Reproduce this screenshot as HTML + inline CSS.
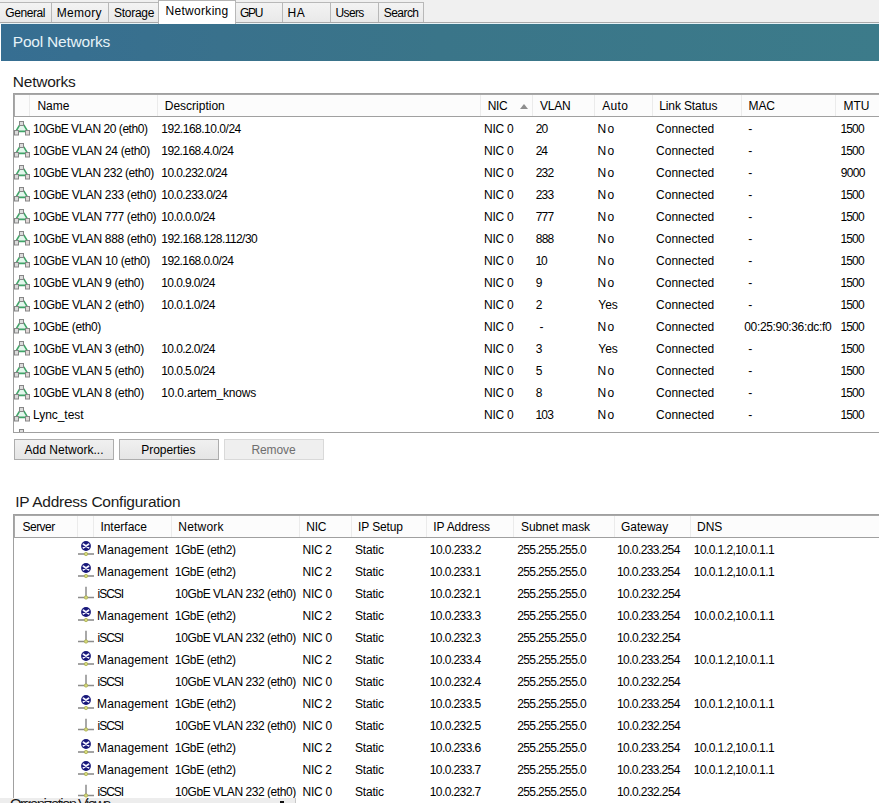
<!DOCTYPE html>
<html><head><meta charset="utf-8"><style>
html,body{margin:0;padding:0;}
body{width:879px;height:803px;position:relative;overflow:hidden;background:#fff;font-family:"Liberation Sans",sans-serif;}
.t{position:absolute;white-space:pre;line-height:14px;}
</style></head><body>
<div style="position:absolute;left:0;top:0;width:879px;height:24px;background:#f0f0f0"></div>
<div style="position:absolute;left:0;top:22px;width:879px;height:1px;background:#a9a9a9"></div>
<div style="position:absolute;left:0;top:23px;width:879px;height:1px;background:#e8f4f8"></div>
<div style="position:absolute;left:-1px;top:2px;width:51px;height:19px;background:linear-gradient(#f3f3f3,#e9e9e9);border:1px solid #b8b8b8;border-bottom:none"></div>
<div class="t" style="left:5.30px;top:5.54px;font-size:12px;letter-spacing:-0.432px;color:#000;">General</div>
<div style="position:absolute;left:51px;top:2px;width:56px;height:19px;background:linear-gradient(#f3f3f3,#e9e9e9);border:1px solid #b8b8b8;border-bottom:none"></div>
<div class="t" style="left:56.82px;top:5.54px;font-size:12px;letter-spacing:0.294px;color:#000;">Memory</div>
<div style="position:absolute;left:108px;top:2px;width:49px;height:19px;background:linear-gradient(#f3f3f3,#e9e9e9);border:1px solid #b8b8b8;border-bottom:none"></div>
<div class="t" style="left:113.95px;top:5.54px;font-size:12px;letter-spacing:-0.258px;color:#000;">Storage</div>
<div style="position:absolute;left:158px;top:0px;width:76px;height:23px;background:#fff;border:1px solid #b4b4b4;border-bottom:none"></div>
<div class="t" style="left:165.52px;top:4.14px;font-size:12px;letter-spacing:0.303px;color:#000;">Networking</div>
<div style="position:absolute;left:235px;top:2px;width:46px;height:19px;background:linear-gradient(#f3f3f3,#e9e9e9);border:1px solid #b8b8b8;border-bottom:none"></div>
<div class="t" style="left:240.00px;top:5.54px;font-size:12px;letter-spacing:-1.290px;color:#000;">GPU</div>
<div style="position:absolute;left:282px;top:2px;width:47px;height:19px;background:linear-gradient(#f3f3f3,#e9e9e9);border:1px solid #b8b8b8;border-bottom:none"></div>
<div class="t" style="left:287.62px;top:5.54px;font-size:12px;letter-spacing:0.530px;color:#000;">HA</div>
<div style="position:absolute;left:330px;top:2px;width:47px;height:19px;background:linear-gradient(#f3f3f3,#e9e9e9);border:1px solid #b8b8b8;border-bottom:none"></div>
<div class="t" style="left:335.57px;top:5.54px;font-size:12px;letter-spacing:-0.670px;color:#000;">Users</div>
<div style="position:absolute;left:378px;top:2px;width:44px;height:19px;background:linear-gradient(#f3f3f3,#e9e9e9);border:1px solid #b8b8b8;border-bottom:none"></div>
<div class="t" style="left:383.85px;top:5.54px;font-size:12px;letter-spacing:-0.578px;color:#000;">Search</div>
<div style="position:absolute;left:1px;top:24px;width:878px;height:37px;background:linear-gradient(90deg,#366e92,#39718c 25%,#3a7589 50%,#3c7b8a)"></div>
<div class="t" style="left:12.83px;top:34.53px;font-size:15.5px;letter-spacing:-0.209px;color:#e6f3f8;">Pool Networks</div>
<div class="t" style="left:12.83px;top:75.03px;font-size:15.5px;letter-spacing:-0.254px;color:#1a1a1a;">Networks</div>
<div style="position:absolute;left:13px;top:93px;width:866px;height:338px;border-top:1px solid #a0a0a0;border-left:1px solid #a0a0a0;border-bottom:1px solid #a0a0a0;background:#fff"></div>
<div style="position:absolute;left:14px;top:94px;width:865px;height:23px;box-sizing:border-box;border-top:1px solid #a8a8a8;border-left:1px solid #a8a8a8;border-bottom:1px solid #a0a0a0;background:#fcfcfc"></div>
<div style="position:absolute;left:29px;top:95px;width:1px;height:21px;background:#ebebeb"></div>
<div style="position:absolute;left:157px;top:95px;width:1px;height:21px;background:#ebebeb"></div>
<div style="position:absolute;left:480px;top:95px;width:1px;height:21px;background:#ebebeb"></div>
<div style="position:absolute;left:532px;top:95px;width:1px;height:21px;background:#ebebeb"></div>
<div style="position:absolute;left:594px;top:95px;width:1px;height:21px;background:#ebebeb"></div>
<div style="position:absolute;left:652px;top:95px;width:1px;height:21px;background:#ebebeb"></div>
<div style="position:absolute;left:741px;top:95px;width:1px;height:21px;background:#ebebeb"></div>
<div style="position:absolute;left:835px;top:95px;width:1px;height:21px;background:#ebebeb"></div>
<div class="t" style="left:37.42px;top:98.84px;font-size:12px;letter-spacing:0.000px;color:#000;">Name</div>
<div class="t" style="left:164.72px;top:98.84px;font-size:12px;letter-spacing:0.004px;color:#000;">Description</div>
<div class="t" style="left:487.72px;top:98.84px;font-size:12px;letter-spacing:-0.315px;color:#000;">NIC</div>
<div class="t" style="left:539.95px;top:98.84px;font-size:12px;letter-spacing:-0.240px;color:#000;">VLAN</div>
<div class="t" style="left:602.27px;top:98.84px;font-size:12px;letter-spacing:0.317px;color:#000;">Auto</div>
<div class="t" style="left:659.22px;top:98.84px;font-size:12px;letter-spacing:-0.116px;color:#000;">Link Status</div>
<div class="t" style="left:748.52px;top:98.84px;font-size:12px;letter-spacing:-0.091px;color:#000;">MAC</div>
<div class="t" style="left:843.62px;top:98.84px;font-size:12px;letter-spacing:-0.088px;color:#000;">MTU</div>
<div style="position:absolute;left:520px;top:104px;width:0;height:0;border-left:4.7px solid transparent;border-right:4.7px solid transparent;border-bottom:5px solid #8e8e8e"></div>
<svg style="position:absolute;left:14px;top:121px" width="17" height="16" viewBox="0 0 17 16"><path d="M5.8 4 L9.7 4 L12.6 9.6 L11 10.4 L4.6 10.4 L2.9 9.6 Z" fill="#e4f6ec"/><path d="M5.6 4.2 L2.6 9.2 M9.9 4.2 L12.9 9.2 M4.6 10.4 H11" stroke="#40a468" stroke-width="1.6" fill="none" stroke-linecap="round"/><rect x="5.5" y="0.5" width="4" height="4" fill="#dcdcdc" stroke="#868686"/><rect x="0.5" y="9.5" width="4" height="4.5" fill="#dcdcdc" stroke="#868686"/><rect x="11.5" y="9.5" width="4" height="4.5" fill="#e2d8d8" stroke="#868686"/></svg>
<div class="t" style="left:33.09px;top:121.84px;font-size:12px;letter-spacing:-0.450px;color:#000;">10GbE VLAN 20 (eth0)</div>
<div class="t" style="left:161.29px;top:121.84px;font-size:12px;letter-spacing:-0.485px;color:#000;">192.168.10.0/24</div>
<div class="t" style="left:484.12px;top:121.84px;font-size:12px;letter-spacing:-0.258px;color:#000;">NIC 0</div>
<div class="t" style="left:535.70px;top:121.84px;font-size:12px;letter-spacing:-0.880px;color:#000;">20</div>
<div class="t" style="left:597.62px;top:121.84px;font-size:12px;letter-spacing:1.240px;color:#000;">No</div>
<div class="t" style="left:655.99px;top:121.84px;font-size:12px;letter-spacing:0.030px;color:#000;">Connected</div>
<div class="t" style="left:748.17px;top:121.84px;font-size:12px;letter-spacing:0.000px;color:#000;">-</div>
<div class="t" style="left:840.39px;top:121.84px;font-size:12px;letter-spacing:-0.807px;color:#000;">1500</div>
<svg style="position:absolute;left:14px;top:143px" width="17" height="16" viewBox="0 0 17 16"><path d="M5.8 4 L9.7 4 L12.6 9.6 L11 10.4 L4.6 10.4 L2.9 9.6 Z" fill="#e4f6ec"/><path d="M5.6 4.2 L2.6 9.2 M9.9 4.2 L12.9 9.2 M4.6 10.4 H11" stroke="#40a468" stroke-width="1.6" fill="none" stroke-linecap="round"/><rect x="5.5" y="0.5" width="4" height="4" fill="#dcdcdc" stroke="#868686"/><rect x="0.5" y="9.5" width="4" height="4.5" fill="#dcdcdc" stroke="#868686"/><rect x="11.5" y="9.5" width="4" height="4.5" fill="#e2d8d8" stroke="#868686"/></svg>
<div class="t" style="left:33.09px;top:143.84px;font-size:12px;letter-spacing:-0.322px;color:#000;">10GbE VLAN 24 (eth0)</div>
<div class="t" style="left:161.29px;top:143.84px;font-size:12px;letter-spacing:-0.571px;color:#000;">192.168.4.0/24</div>
<div class="t" style="left:484.12px;top:143.84px;font-size:12px;letter-spacing:-0.258px;color:#000;">NIC 0</div>
<div class="t" style="left:535.70px;top:143.84px;font-size:12px;letter-spacing:-1.030px;color:#000;">24</div>
<div class="t" style="left:597.62px;top:143.84px;font-size:12px;letter-spacing:1.240px;color:#000;">No</div>
<div class="t" style="left:655.99px;top:143.84px;font-size:12px;letter-spacing:0.030px;color:#000;">Connected</div>
<div class="t" style="left:748.17px;top:143.84px;font-size:12px;letter-spacing:0.000px;color:#000;">-</div>
<div class="t" style="left:840.39px;top:143.84px;font-size:12px;letter-spacing:-0.807px;color:#000;">1500</div>
<svg style="position:absolute;left:14px;top:165px" width="17" height="16" viewBox="0 0 17 16"><path d="M5.8 4 L9.7 4 L12.6 9.6 L11 10.4 L4.6 10.4 L2.9 9.6 Z" fill="#e4f6ec"/><path d="M5.6 4.2 L2.6 9.2 M9.9 4.2 L12.9 9.2 M4.6 10.4 H11" stroke="#40a468" stroke-width="1.6" fill="none" stroke-linecap="round"/><rect x="5.5" y="0.5" width="4" height="4" fill="#dcdcdc" stroke="#868686"/><rect x="0.5" y="9.5" width="4" height="4.5" fill="#dcdcdc" stroke="#868686"/><rect x="11.5" y="9.5" width="4" height="4.5" fill="#e2d8d8" stroke="#868686"/></svg>
<div class="t" style="left:33.09px;top:165.84px;font-size:12px;letter-spacing:-0.451px;color:#000;">10GbE VLAN 232 (eth0)</div>
<div class="t" style="left:161.29px;top:165.84px;font-size:12px;letter-spacing:-0.575px;color:#000;">10.0.232.0/24</div>
<div class="t" style="left:484.12px;top:165.84px;font-size:12px;letter-spacing:-0.258px;color:#000;">NIC 0</div>
<div class="t" style="left:535.70px;top:165.84px;font-size:12px;letter-spacing:-0.773px;color:#000;">232</div>
<div class="t" style="left:597.62px;top:165.84px;font-size:12px;letter-spacing:1.240px;color:#000;">No</div>
<div class="t" style="left:655.99px;top:165.84px;font-size:12px;letter-spacing:0.030px;color:#000;">Connected</div>
<div class="t" style="left:748.17px;top:165.84px;font-size:12px;letter-spacing:0.000px;color:#000;">-</div>
<div class="t" style="left:840.74px;top:165.84px;font-size:12px;letter-spacing:-0.687px;color:#000;">9000</div>
<svg style="position:absolute;left:14px;top:187px" width="17" height="16" viewBox="0 0 17 16"><path d="M5.8 4 L9.7 4 L12.6 9.6 L11 10.4 L4.6 10.4 L2.9 9.6 Z" fill="#e4f6ec"/><path d="M5.6 4.2 L2.6 9.2 M9.9 4.2 L12.9 9.2 M4.6 10.4 H11" stroke="#40a468" stroke-width="1.6" fill="none" stroke-linecap="round"/><rect x="5.5" y="0.5" width="4" height="4" fill="#dcdcdc" stroke="#868686"/><rect x="0.5" y="9.5" width="4" height="4.5" fill="#dcdcdc" stroke="#868686"/><rect x="11.5" y="9.5" width="4" height="4.5" fill="#e2d8d8" stroke="#868686"/></svg>
<div class="t" style="left:33.09px;top:187.84px;font-size:12px;letter-spacing:-0.332px;color:#000;">10GbE VLAN 233 (eth0)</div>
<div class="t" style="left:161.29px;top:187.84px;font-size:12px;letter-spacing:-0.575px;color:#000;">10.0.233.0/24</div>
<div class="t" style="left:484.12px;top:187.84px;font-size:12px;letter-spacing:-0.258px;color:#000;">NIC 0</div>
<div class="t" style="left:535.70px;top:187.84px;font-size:12px;letter-spacing:-0.773px;color:#000;">233</div>
<div class="t" style="left:597.62px;top:187.84px;font-size:12px;letter-spacing:1.240px;color:#000;">No</div>
<div class="t" style="left:655.99px;top:187.84px;font-size:12px;letter-spacing:0.030px;color:#000;">Connected</div>
<div class="t" style="left:748.17px;top:187.84px;font-size:12px;letter-spacing:0.000px;color:#000;">-</div>
<div class="t" style="left:840.39px;top:187.84px;font-size:12px;letter-spacing:-0.807px;color:#000;">1500</div>
<svg style="position:absolute;left:14px;top:209px" width="17" height="16" viewBox="0 0 17 16"><path d="M5.8 4 L9.7 4 L12.6 9.6 L11 10.4 L4.6 10.4 L2.9 9.6 Z" fill="#e4f6ec"/><path d="M5.6 4.2 L2.6 9.2 M9.9 4.2 L12.9 9.2 M4.6 10.4 H11" stroke="#40a468" stroke-width="1.6" fill="none" stroke-linecap="round"/><rect x="5.5" y="0.5" width="4" height="4" fill="#dcdcdc" stroke="#868686"/><rect x="0.5" y="9.5" width="4" height="4.5" fill="#dcdcdc" stroke="#868686"/><rect x="11.5" y="9.5" width="4" height="4.5" fill="#e2d8d8" stroke="#868686"/></svg>
<div class="t" style="left:33.09px;top:209.84px;font-size:12px;letter-spacing:-0.332px;color:#000;">10GbE VLAN 777 (eth0)</div>
<div class="t" style="left:161.29px;top:209.84px;font-size:12px;letter-spacing:-0.588px;color:#000;">10.0.0.0/24</div>
<div class="t" style="left:484.12px;top:209.84px;font-size:12px;letter-spacing:-0.258px;color:#000;">NIC 0</div>
<div class="t" style="left:535.68px;top:209.84px;font-size:12px;letter-spacing:-0.773px;color:#000;">777</div>
<div class="t" style="left:597.62px;top:209.84px;font-size:12px;letter-spacing:1.240px;color:#000;">No</div>
<div class="t" style="left:655.99px;top:209.84px;font-size:12px;letter-spacing:0.030px;color:#000;">Connected</div>
<div class="t" style="left:748.17px;top:209.84px;font-size:12px;letter-spacing:0.000px;color:#000;">-</div>
<div class="t" style="left:840.39px;top:209.84px;font-size:12px;letter-spacing:-0.807px;color:#000;">1500</div>
<svg style="position:absolute;left:14px;top:231px" width="17" height="16" viewBox="0 0 17 16"><path d="M5.8 4 L9.7 4 L12.6 9.6 L11 10.4 L4.6 10.4 L2.9 9.6 Z" fill="#e4f6ec"/><path d="M5.6 4.2 L2.6 9.2 M9.9 4.2 L12.9 9.2 M4.6 10.4 H11" stroke="#40a468" stroke-width="1.6" fill="none" stroke-linecap="round"/><rect x="5.5" y="0.5" width="4" height="4" fill="#dcdcdc" stroke="#868686"/><rect x="0.5" y="9.5" width="4" height="4.5" fill="#dcdcdc" stroke="#868686"/><rect x="11.5" y="9.5" width="4" height="4.5" fill="#e2d8d8" stroke="#868686"/></svg>
<div class="t" style="left:33.09px;top:231.84px;font-size:12px;letter-spacing:-0.332px;color:#000;">10GbE VLAN 888 (eth0)</div>
<div class="t" style="left:161.29px;top:231.84px;font-size:12px;letter-spacing:-0.558px;color:#000;">192.168.128.112/30</div>
<div class="t" style="left:484.12px;top:231.84px;font-size:12px;letter-spacing:-0.258px;color:#000;">NIC 0</div>
<div class="t" style="left:535.78px;top:231.84px;font-size:12px;letter-spacing:-0.773px;color:#000;">888</div>
<div class="t" style="left:597.62px;top:231.84px;font-size:12px;letter-spacing:1.240px;color:#000;">No</div>
<div class="t" style="left:655.99px;top:231.84px;font-size:12px;letter-spacing:0.030px;color:#000;">Connected</div>
<div class="t" style="left:748.17px;top:231.84px;font-size:12px;letter-spacing:0.000px;color:#000;">-</div>
<div class="t" style="left:840.39px;top:231.84px;font-size:12px;letter-spacing:-0.807px;color:#000;">1500</div>
<svg style="position:absolute;left:14px;top:253px" width="17" height="16" viewBox="0 0 17 16"><path d="M5.8 4 L9.7 4 L12.6 9.6 L11 10.4 L4.6 10.4 L2.9 9.6 Z" fill="#e4f6ec"/><path d="M5.6 4.2 L2.6 9.2 M9.9 4.2 L12.9 9.2 M4.6 10.4 H11" stroke="#40a468" stroke-width="1.6" fill="none" stroke-linecap="round"/><rect x="5.5" y="0.5" width="4" height="4" fill="#dcdcdc" stroke="#868686"/><rect x="0.5" y="9.5" width="4" height="4.5" fill="#dcdcdc" stroke="#868686"/><rect x="11.5" y="9.5" width="4" height="4.5" fill="#e2d8d8" stroke="#868686"/></svg>
<div class="t" style="left:33.09px;top:253.84px;font-size:12px;letter-spacing:-0.322px;color:#000;">10GbE VLAN 10 (eth0)</div>
<div class="t" style="left:161.29px;top:253.84px;font-size:12px;letter-spacing:-0.571px;color:#000;">192.168.0.0/24</div>
<div class="t" style="left:484.12px;top:253.84px;font-size:12px;letter-spacing:-0.258px;color:#000;">NIC 0</div>
<div class="t" style="left:535.39px;top:253.84px;font-size:12px;letter-spacing:-1.030px;color:#000;">10</div>
<div class="t" style="left:597.62px;top:253.84px;font-size:12px;letter-spacing:1.240px;color:#000;">No</div>
<div class="t" style="left:655.99px;top:253.84px;font-size:12px;letter-spacing:0.030px;color:#000;">Connected</div>
<div class="t" style="left:748.17px;top:253.84px;font-size:12px;letter-spacing:0.000px;color:#000;">-</div>
<div class="t" style="left:840.39px;top:253.84px;font-size:12px;letter-spacing:-0.807px;color:#000;">1500</div>
<svg style="position:absolute;left:14px;top:275px" width="17" height="16" viewBox="0 0 17 16"><path d="M5.8 4 L9.7 4 L12.6 9.6 L11 10.4 L4.6 10.4 L2.9 9.6 Z" fill="#e4f6ec"/><path d="M5.6 4.2 L2.6 9.2 M9.9 4.2 L12.9 9.2 M4.6 10.4 H11" stroke="#40a468" stroke-width="1.6" fill="none" stroke-linecap="round"/><rect x="5.5" y="0.5" width="4" height="4" fill="#dcdcdc" stroke="#868686"/><rect x="0.5" y="9.5" width="4" height="4.5" fill="#dcdcdc" stroke="#868686"/><rect x="11.5" y="9.5" width="4" height="4.5" fill="#e2d8d8" stroke="#868686"/></svg>
<div class="t" style="left:33.09px;top:275.84px;font-size:12px;letter-spacing:-0.312px;color:#000;">10GbE VLAN 9 (eth0)</div>
<div class="t" style="left:161.29px;top:275.84px;font-size:12px;letter-spacing:-0.588px;color:#000;">10.0.9.0/24</div>
<div class="t" style="left:484.12px;top:275.84px;font-size:12px;letter-spacing:-0.258px;color:#000;">NIC 0</div>
<div class="t" style="left:535.74px;top:275.84px;font-size:12px;letter-spacing:0.000px;color:#000;">9</div>
<div class="t" style="left:597.62px;top:275.84px;font-size:12px;letter-spacing:1.240px;color:#000;">No</div>
<div class="t" style="left:655.99px;top:275.84px;font-size:12px;letter-spacing:0.030px;color:#000;">Connected</div>
<div class="t" style="left:748.17px;top:275.84px;font-size:12px;letter-spacing:0.000px;color:#000;">-</div>
<div class="t" style="left:840.39px;top:275.84px;font-size:12px;letter-spacing:-0.807px;color:#000;">1500</div>
<svg style="position:absolute;left:14px;top:297px" width="17" height="16" viewBox="0 0 17 16"><path d="M5.8 4 L9.7 4 L12.6 9.6 L11 10.4 L4.6 10.4 L2.9 9.6 Z" fill="#e4f6ec"/><path d="M5.6 4.2 L2.6 9.2 M9.9 4.2 L12.9 9.2 M4.6 10.4 H11" stroke="#40a468" stroke-width="1.6" fill="none" stroke-linecap="round"/><rect x="5.5" y="0.5" width="4" height="4" fill="#dcdcdc" stroke="#868686"/><rect x="0.5" y="9.5" width="4" height="4.5" fill="#dcdcdc" stroke="#868686"/><rect x="11.5" y="9.5" width="4" height="4.5" fill="#e2d8d8" stroke="#868686"/></svg>
<div class="t" style="left:33.09px;top:297.84px;font-size:12px;letter-spacing:-0.312px;color:#000;">10GbE VLAN 2 (eth0)</div>
<div class="t" style="left:161.29px;top:297.84px;font-size:12px;letter-spacing:-0.588px;color:#000;">10.0.1.0/24</div>
<div class="t" style="left:484.12px;top:297.84px;font-size:12px;letter-spacing:-0.258px;color:#000;">NIC 0</div>
<div class="t" style="left:535.70px;top:297.84px;font-size:12px;letter-spacing:0.000px;color:#000;">2</div>
<div class="t" style="left:598.33px;top:297.84px;font-size:12px;letter-spacing:-0.070px;color:#000;">Yes</div>
<div class="t" style="left:655.99px;top:297.84px;font-size:12px;letter-spacing:0.030px;color:#000;">Connected</div>
<div class="t" style="left:748.17px;top:297.84px;font-size:12px;letter-spacing:0.000px;color:#000;">-</div>
<div class="t" style="left:840.39px;top:297.84px;font-size:12px;letter-spacing:-0.807px;color:#000;">1500</div>
<svg style="position:absolute;left:14px;top:319px" width="17" height="16" viewBox="0 0 17 16"><path d="M5.8 4 L9.7 4 L12.6 9.6 L11 10.4 L4.6 10.4 L2.9 9.6 Z" fill="#e4f6ec"/><path d="M5.6 4.2 L2.6 9.2 M9.9 4.2 L12.9 9.2 M4.6 10.4 H11" stroke="#40a468" stroke-width="1.6" fill="none" stroke-linecap="round"/><rect x="5.5" y="0.5" width="4" height="4" fill="#dcdcdc" stroke="#868686"/><rect x="0.5" y="9.5" width="4" height="4.5" fill="#dcdcdc" stroke="#868686"/><rect x="11.5" y="9.5" width="4" height="4.5" fill="#e2d8d8" stroke="#868686"/></svg>
<div class="t" style="left:33.09px;top:319.84px;font-size:12px;letter-spacing:-0.341px;color:#000;">10GbE (eth0)</div>
<div class="t" style="left:484.12px;top:319.84px;font-size:12px;letter-spacing:-0.258px;color:#000;">NIC 0</div>
<div class="t" style="left:539.47px;top:319.84px;font-size:12px;letter-spacing:0.000px;color:#000;">-</div>
<div class="t" style="left:597.62px;top:319.84px;font-size:12px;letter-spacing:1.240px;color:#000;">No</div>
<div class="t" style="left:655.99px;top:319.84px;font-size:12px;letter-spacing:0.030px;color:#000;">Connected</div>
<div class="t" style="left:744.23px;top:319.84px;font-size:12px;letter-spacing:-0.338px;color:#000;">00:25:90:36:dc:f0</div>
<div class="t" style="left:840.39px;top:319.84px;font-size:12px;letter-spacing:-0.807px;color:#000;">1500</div>
<svg style="position:absolute;left:14px;top:341px" width="17" height="16" viewBox="0 0 17 16"><path d="M5.8 4 L9.7 4 L12.6 9.6 L11 10.4 L4.6 10.4 L2.9 9.6 Z" fill="#e4f6ec"/><path d="M5.6 4.2 L2.6 9.2 M9.9 4.2 L12.9 9.2 M4.6 10.4 H11" stroke="#40a468" stroke-width="1.6" fill="none" stroke-linecap="round"/><rect x="5.5" y="0.5" width="4" height="4" fill="#dcdcdc" stroke="#868686"/><rect x="0.5" y="9.5" width="4" height="4.5" fill="#dcdcdc" stroke="#868686"/><rect x="11.5" y="9.5" width="4" height="4.5" fill="#e2d8d8" stroke="#868686"/></svg>
<div class="t" style="left:33.09px;top:341.84px;font-size:12px;letter-spacing:-0.312px;color:#000;">10GbE VLAN 3 (eth0)</div>
<div class="t" style="left:161.29px;top:341.84px;font-size:12px;letter-spacing:-0.588px;color:#000;">10.0.2.0/24</div>
<div class="t" style="left:484.12px;top:341.84px;font-size:12px;letter-spacing:-0.258px;color:#000;">NIC 0</div>
<div class="t" style="left:535.84px;top:341.84px;font-size:12px;letter-spacing:0.000px;color:#000;">3</div>
<div class="t" style="left:598.33px;top:341.84px;font-size:12px;letter-spacing:-0.070px;color:#000;">Yes</div>
<div class="t" style="left:655.99px;top:341.84px;font-size:12px;letter-spacing:0.030px;color:#000;">Connected</div>
<div class="t" style="left:748.17px;top:341.84px;font-size:12px;letter-spacing:0.000px;color:#000;">-</div>
<div class="t" style="left:840.39px;top:341.84px;font-size:12px;letter-spacing:-0.807px;color:#000;">1500</div>
<svg style="position:absolute;left:14px;top:363px" width="17" height="16" viewBox="0 0 17 16"><path d="M5.8 4 L9.7 4 L12.6 9.6 L11 10.4 L4.6 10.4 L2.9 9.6 Z" fill="#e4f6ec"/><path d="M5.6 4.2 L2.6 9.2 M9.9 4.2 L12.9 9.2 M4.6 10.4 H11" stroke="#40a468" stroke-width="1.6" fill="none" stroke-linecap="round"/><rect x="5.5" y="0.5" width="4" height="4" fill="#dcdcdc" stroke="#868686"/><rect x="0.5" y="9.5" width="4" height="4.5" fill="#dcdcdc" stroke="#868686"/><rect x="11.5" y="9.5" width="4" height="4.5" fill="#e2d8d8" stroke="#868686"/></svg>
<div class="t" style="left:33.09px;top:363.84px;font-size:12px;letter-spacing:-0.312px;color:#000;">10GbE VLAN 5 (eth0)</div>
<div class="t" style="left:161.29px;top:363.84px;font-size:12px;letter-spacing:-0.588px;color:#000;">10.0.5.0/24</div>
<div class="t" style="left:484.12px;top:363.84px;font-size:12px;letter-spacing:-0.258px;color:#000;">NIC 0</div>
<div class="t" style="left:535.82px;top:363.84px;font-size:12px;letter-spacing:0.000px;color:#000;">5</div>
<div class="t" style="left:597.62px;top:363.84px;font-size:12px;letter-spacing:1.240px;color:#000;">No</div>
<div class="t" style="left:655.99px;top:363.84px;font-size:12px;letter-spacing:0.030px;color:#000;">Connected</div>
<div class="t" style="left:748.17px;top:363.84px;font-size:12px;letter-spacing:0.000px;color:#000;">-</div>
<div class="t" style="left:840.39px;top:363.84px;font-size:12px;letter-spacing:-0.807px;color:#000;">1500</div>
<svg style="position:absolute;left:14px;top:385px" width="17" height="16" viewBox="0 0 17 16"><path d="M5.8 4 L9.7 4 L12.6 9.6 L11 10.4 L4.6 10.4 L2.9 9.6 Z" fill="#e4f6ec"/><path d="M5.6 4.2 L2.6 9.2 M9.9 4.2 L12.9 9.2 M4.6 10.4 H11" stroke="#40a468" stroke-width="1.6" fill="none" stroke-linecap="round"/><rect x="5.5" y="0.5" width="4" height="4" fill="#dcdcdc" stroke="#868686"/><rect x="0.5" y="9.5" width="4" height="4.5" fill="#dcdcdc" stroke="#868686"/><rect x="11.5" y="9.5" width="4" height="4.5" fill="#e2d8d8" stroke="#868686"/></svg>
<div class="t" style="left:33.09px;top:385.84px;font-size:12px;letter-spacing:-0.312px;color:#000;">10GbE VLAN 8 (eth0)</div>
<div class="t" style="left:161.29px;top:385.84px;font-size:12px;letter-spacing:-0.211px;color:#000;">10.0.artem_knows</div>
<div class="t" style="left:484.12px;top:385.84px;font-size:12px;letter-spacing:-0.258px;color:#000;">NIC 0</div>
<div class="t" style="left:535.78px;top:385.84px;font-size:12px;letter-spacing:0.000px;color:#000;">8</div>
<div class="t" style="left:597.62px;top:385.84px;font-size:12px;letter-spacing:1.240px;color:#000;">No</div>
<div class="t" style="left:655.99px;top:385.84px;font-size:12px;letter-spacing:0.030px;color:#000;">Connected</div>
<div class="t" style="left:748.17px;top:385.84px;font-size:12px;letter-spacing:0.000px;color:#000;">-</div>
<div class="t" style="left:840.39px;top:385.84px;font-size:12px;letter-spacing:-0.807px;color:#000;">1500</div>
<svg style="position:absolute;left:14px;top:407px" width="17" height="16" viewBox="0 0 17 16"><path d="M5.8 4 L9.7 4 L12.6 9.6 L11 10.4 L4.6 10.4 L2.9 9.6 Z" fill="#e4f6ec"/><path d="M5.6 4.2 L2.6 9.2 M9.9 4.2 L12.9 9.2 M4.6 10.4 H11" stroke="#40a468" stroke-width="1.6" fill="none" stroke-linecap="round"/><rect x="5.5" y="0.5" width="4" height="4" fill="#dcdcdc" stroke="#868686"/><rect x="0.5" y="9.5" width="4" height="4.5" fill="#dcdcdc" stroke="#868686"/><rect x="11.5" y="9.5" width="4" height="4.5" fill="#e2d8d8" stroke="#868686"/></svg>
<div class="t" style="left:33.02px;top:407.84px;font-size:12px;letter-spacing:-0.044px;color:#000;">Lync_test</div>
<div class="t" style="left:484.12px;top:407.84px;font-size:12px;letter-spacing:-0.258px;color:#000;">NIC 0</div>
<div class="t" style="left:535.39px;top:407.84px;font-size:12px;letter-spacing:-0.773px;color:#000;">103</div>
<div class="t" style="left:597.62px;top:407.84px;font-size:12px;letter-spacing:1.240px;color:#000;">No</div>
<div class="t" style="left:655.99px;top:407.84px;font-size:12px;letter-spacing:0.030px;color:#000;">Connected</div>
<div class="t" style="left:748.17px;top:407.84px;font-size:12px;letter-spacing:0.000px;color:#000;">-</div>
<div class="t" style="left:840.39px;top:407.84px;font-size:12px;letter-spacing:-0.807px;color:#000;">1500</div>
<div style="position:absolute;left:14px;top:425px;width:20px;height:7px;overflow:hidden"><svg style="position:absolute;left:0px;top:4px" width="17" height="16" viewBox="0 0 17 16"><path d="M5.8 4 L9.7 4 L12.6 9.6 L11 10.4 L4.6 10.4 L2.9 9.6 Z" fill="#e4f6ec"/><path d="M5.6 4.2 L2.6 9.2 M9.9 4.2 L12.9 9.2 M4.6 10.4 H11" stroke="#40a468" stroke-width="1.6" fill="none" stroke-linecap="round"/><rect x="5.5" y="0.5" width="4" height="4" fill="#dcdcdc" stroke="#868686"/><rect x="0.5" y="9.5" width="4" height="4.5" fill="#dcdcdc" stroke="#868686"/><rect x="11.5" y="9.5" width="4" height="4.5" fill="#e2d8d8" stroke="#868686"/></svg></div>
<div style="position:absolute;left:14px;top:439px;width:98px;height:19px;background:linear-gradient(#f0f0f0,#e5e5e5);border:1px solid #adadad"></div><div class="t" style="left:24.57px;top:443.14px;font-size:12px;letter-spacing:0.018px;color:#000;">Add Network...</div>
<div style="position:absolute;left:119px;top:439px;width:98px;height:19px;background:linear-gradient(#f0f0f0,#e5e5e5);border:1px solid #adadad"></div><div class="t" style="left:141.32px;top:443.14px;font-size:12px;letter-spacing:-0.064px;color:#000;">Properties</div>
<div style="position:absolute;left:224px;top:439px;width:98px;height:19px;background:#efefef;border:1px solid #d9d9d9"></div><div class="t" style="left:251.42px;top:443.14px;font-size:12px;letter-spacing:-0.074px;color:#6e6e6e;">Remove</div>
<div class="t" style="left:15.17px;top:495.23px;font-size:15.5px;letter-spacing:-0.250px;color:#1a1a1a;">IP Address Configuration</div>
<div style="position:absolute;left:13px;top:514px;width:866px;height:300px;border-top:1px solid #a0a0a0;border-left:1px solid #a0a0a0;background:#fff"></div>
<div style="position:absolute;left:14px;top:515px;width:865px;height:23px;box-sizing:border-box;border-top:1px solid #a8a8a8;border-left:1px solid #a8a8a8;border-bottom:1px solid #a0a0a0;background:#fcfcfc"></div>
<div style="position:absolute;left:77px;top:516px;width:1px;height:21px;background:#ebebeb"></div>
<div style="position:absolute;left:93px;top:516px;width:1px;height:21px;background:#ebebeb"></div>
<div style="position:absolute;left:171px;top:516px;width:1px;height:21px;background:#ebebeb"></div>
<div style="position:absolute;left:299px;top:516px;width:1px;height:21px;background:#ebebeb"></div>
<div style="position:absolute;left:351px;top:516px;width:1px;height:21px;background:#ebebeb"></div>
<div style="position:absolute;left:426px;top:516px;width:1px;height:21px;background:#ebebeb"></div>
<div style="position:absolute;left:513px;top:516px;width:1px;height:21px;background:#ebebeb"></div>
<div style="position:absolute;left:614px;top:516px;width:1px;height:21px;background:#ebebeb"></div>
<div style="position:absolute;left:690px;top:516px;width:1px;height:21px;background:#ebebeb"></div>
<div class="t" style="left:22.55px;top:519.84px;font-size:12px;letter-spacing:-0.540px;color:#000;">Server</div>
<div class="t" style="left:100.39px;top:519.84px;font-size:12px;letter-spacing:-0.006px;color:#000;">Interface</div>
<div class="t" style="left:178.32px;top:519.84px;font-size:12px;letter-spacing:0.193px;color:#000;">Network</div>
<div class="t" style="left:306.32px;top:519.84px;font-size:12px;letter-spacing:-0.315px;color:#000;">NIC</div>
<div class="t" style="left:358.09px;top:519.84px;font-size:12px;letter-spacing:-0.122px;color:#000;">IP Setup</div>
<div class="t" style="left:433.19px;top:519.84px;font-size:12px;letter-spacing:-0.105px;color:#000;">IP Address</div>
<div class="t" style="left:521.05px;top:519.84px;font-size:12px;letter-spacing:-0.102px;color:#000;">Subnet mask</div>
<div class="t" style="left:621.10px;top:519.84px;font-size:12px;letter-spacing:-0.054px;color:#000;">Gateway</div>
<div class="t" style="left:697.12px;top:519.84px;font-size:12px;letter-spacing:-0.086px;color:#000;">DNS</div>
<svg style="position:absolute;left:77px;top:539px" width="18" height="18" viewBox="0 0 18 18"><path d="M1 15 H17" stroke="#8c8c8c" stroke-width="1.6"/><circle cx="9" cy="7" r="4.9" fill="#17177a"/><path d="M6.4 5.2 L11.6 8.8 M11.6 5.2 L6.4 8.8" stroke="#f4f4ff" stroke-width="1.7" stroke-linecap="round"/><circle cx="9" cy="15" r="1.7" fill="#d6da7a" stroke="#a4a84a" stroke-width="0.7"/></svg>
<div class="t" style="left:97.12px;top:543.04px;font-size:12px;letter-spacing:0.091px;color:#000;">Management</div>
<div class="t" style="left:174.69px;top:543.04px;font-size:12px;letter-spacing:-0.411px;color:#000;">1GbE (eth2)</div>
<div class="t" style="left:302.52px;top:543.04px;font-size:12px;letter-spacing:-0.306px;color:#000;">NIC 2</div>
<div class="t" style="left:354.95px;top:543.04px;font-size:12px;letter-spacing:-0.188px;color:#000;">Static</div>
<div class="t" style="left:429.79px;top:543.04px;font-size:12px;letter-spacing:-0.557px;color:#000;">10.0.233.2</div>
<div class="t" style="left:517.20px;top:543.04px;font-size:12px;letter-spacing:-0.607px;color:#000;">255.255.255.0</div>
<div class="t" style="left:616.99px;top:543.04px;font-size:12px;letter-spacing:-0.609px;color:#000;">10.0.233.254</div>
<div class="t" style="left:693.79px;top:543.04px;font-size:12px;letter-spacing:-0.580px;color:#000;">10.0.1.2,10.0.1.1</div>
<svg style="position:absolute;left:77px;top:561px" width="18" height="18" viewBox="0 0 18 18"><path d="M1 15 H17" stroke="#8c8c8c" stroke-width="1.6"/><circle cx="9" cy="7" r="4.9" fill="#17177a"/><path d="M6.4 5.2 L11.6 8.8 M11.6 5.2 L6.4 8.8" stroke="#f4f4ff" stroke-width="1.7" stroke-linecap="round"/><circle cx="9" cy="15" r="1.7" fill="#d6da7a" stroke="#a4a84a" stroke-width="0.7"/></svg>
<div class="t" style="left:97.12px;top:565.04px;font-size:12px;letter-spacing:0.091px;color:#000;">Management</div>
<div class="t" style="left:174.69px;top:565.04px;font-size:12px;letter-spacing:-0.411px;color:#000;">1GbE (eth2)</div>
<div class="t" style="left:302.52px;top:565.04px;font-size:12px;letter-spacing:-0.306px;color:#000;">NIC 2</div>
<div class="t" style="left:354.95px;top:565.04px;font-size:12px;letter-spacing:-0.188px;color:#000;">Static</div>
<div class="t" style="left:429.79px;top:565.04px;font-size:12px;letter-spacing:-0.590px;color:#000;">10.0.233.1</div>
<div class="t" style="left:517.20px;top:565.04px;font-size:12px;letter-spacing:-0.607px;color:#000;">255.255.255.0</div>
<div class="t" style="left:616.99px;top:565.04px;font-size:12px;letter-spacing:-0.609px;color:#000;">10.0.233.254</div>
<div class="t" style="left:693.79px;top:565.04px;font-size:12px;letter-spacing:-0.580px;color:#000;">10.0.1.2,10.0.1.1</div>
<svg style="position:absolute;left:77px;top:583px" width="18" height="18" viewBox="0 0 18 18"><path d="M1 14.5 H17 M9 3.8 V14.5" stroke="#8c8c8c" stroke-width="1.5"/><circle cx="9" cy="14.5" r="1.7" fill="#d6da7a" stroke="#a4a84a" stroke-width="0.7"/></svg>
<div class="t" style="left:97.60px;top:587.04px;font-size:12px;letter-spacing:-1.042px;color:#000;">iSCSI</div>
<div class="t" style="left:175.09px;top:587.04px;font-size:12px;letter-spacing:-0.451px;color:#000;">10GbE VLAN 232 (eth0)</div>
<div class="t" style="left:302.52px;top:587.04px;font-size:12px;letter-spacing:-0.258px;color:#000;">NIC 0</div>
<div class="t" style="left:354.95px;top:587.04px;font-size:12px;letter-spacing:-0.188px;color:#000;">Static</div>
<div class="t" style="left:429.79px;top:587.04px;font-size:12px;letter-spacing:-0.590px;color:#000;">10.0.232.1</div>
<div class="t" style="left:517.20px;top:587.04px;font-size:12px;letter-spacing:-0.607px;color:#000;">255.255.255.0</div>
<div class="t" style="left:616.99px;top:587.04px;font-size:12px;letter-spacing:-0.576px;color:#000;">10.0.232.254</div>
<svg style="position:absolute;left:77px;top:605px" width="18" height="18" viewBox="0 0 18 18"><path d="M1 15 H17" stroke="#8c8c8c" stroke-width="1.6"/><circle cx="9" cy="7" r="4.9" fill="#17177a"/><path d="M6.4 5.2 L11.6 8.8 M11.6 5.2 L6.4 8.8" stroke="#f4f4ff" stroke-width="1.7" stroke-linecap="round"/><circle cx="9" cy="15" r="1.7" fill="#d6da7a" stroke="#a4a84a" stroke-width="0.7"/></svg>
<div class="t" style="left:97.12px;top:609.04px;font-size:12px;letter-spacing:0.091px;color:#000;">Management</div>
<div class="t" style="left:174.69px;top:609.04px;font-size:12px;letter-spacing:-0.411px;color:#000;">1GbE (eth2)</div>
<div class="t" style="left:302.52px;top:609.04px;font-size:12px;letter-spacing:-0.306px;color:#000;">NIC 2</div>
<div class="t" style="left:354.95px;top:609.04px;font-size:12px;letter-spacing:-0.188px;color:#000;">Static</div>
<div class="t" style="left:429.79px;top:609.04px;font-size:12px;letter-spacing:-0.590px;color:#000;">10.0.233.3</div>
<div class="t" style="left:517.20px;top:609.04px;font-size:12px;letter-spacing:-0.607px;color:#000;">255.255.255.0</div>
<div class="t" style="left:616.99px;top:609.04px;font-size:12px;letter-spacing:-0.609px;color:#000;">10.0.233.254</div>
<div class="t" style="left:693.79px;top:609.04px;font-size:12px;letter-spacing:-0.570px;color:#000;">10.0.0.2,10.0.1.1</div>
<svg style="position:absolute;left:77px;top:627px" width="18" height="18" viewBox="0 0 18 18"><path d="M1 14.5 H17 M9 3.8 V14.5" stroke="#8c8c8c" stroke-width="1.5"/><circle cx="9" cy="14.5" r="1.7" fill="#d6da7a" stroke="#a4a84a" stroke-width="0.7"/></svg>
<div class="t" style="left:97.60px;top:631.04px;font-size:12px;letter-spacing:-1.042px;color:#000;">iSCSI</div>
<div class="t" style="left:175.09px;top:631.04px;font-size:12px;letter-spacing:-0.451px;color:#000;">10GbE VLAN 232 (eth0)</div>
<div class="t" style="left:302.52px;top:631.04px;font-size:12px;letter-spacing:-0.258px;color:#000;">NIC 0</div>
<div class="t" style="left:354.95px;top:631.04px;font-size:12px;letter-spacing:-0.188px;color:#000;">Static</div>
<div class="t" style="left:429.79px;top:631.04px;font-size:12px;letter-spacing:-0.590px;color:#000;">10.0.232.3</div>
<div class="t" style="left:517.20px;top:631.04px;font-size:12px;letter-spacing:-0.607px;color:#000;">255.255.255.0</div>
<div class="t" style="left:616.99px;top:631.04px;font-size:12px;letter-spacing:-0.576px;color:#000;">10.0.232.254</div>
<svg style="position:absolute;left:77px;top:649px" width="18" height="18" viewBox="0 0 18 18"><path d="M1 15 H17" stroke="#8c8c8c" stroke-width="1.6"/><circle cx="9" cy="7" r="4.9" fill="#17177a"/><path d="M6.4 5.2 L11.6 8.8 M11.6 5.2 L6.4 8.8" stroke="#f4f4ff" stroke-width="1.7" stroke-linecap="round"/><circle cx="9" cy="15" r="1.7" fill="#d6da7a" stroke="#a4a84a" stroke-width="0.7"/></svg>
<div class="t" style="left:97.12px;top:653.04px;font-size:12px;letter-spacing:0.091px;color:#000;">Management</div>
<div class="t" style="left:174.69px;top:653.04px;font-size:12px;letter-spacing:-0.411px;color:#000;">1GbE (eth2)</div>
<div class="t" style="left:302.52px;top:653.04px;font-size:12px;letter-spacing:-0.306px;color:#000;">NIC 2</div>
<div class="t" style="left:354.95px;top:653.04px;font-size:12px;letter-spacing:-0.188px;color:#000;">Static</div>
<div class="t" style="left:429.79px;top:653.04px;font-size:12px;letter-spacing:-0.590px;color:#000;">10.0.233.4</div>
<div class="t" style="left:517.20px;top:653.04px;font-size:12px;letter-spacing:-0.607px;color:#000;">255.255.255.0</div>
<div class="t" style="left:616.99px;top:653.04px;font-size:12px;letter-spacing:-0.609px;color:#000;">10.0.233.254</div>
<div class="t" style="left:693.79px;top:653.04px;font-size:12px;letter-spacing:-0.580px;color:#000;">10.0.1.2,10.0.1.1</div>
<svg style="position:absolute;left:77px;top:671px" width="18" height="18" viewBox="0 0 18 18"><path d="M1 14.5 H17 M9 3.8 V14.5" stroke="#8c8c8c" stroke-width="1.5"/><circle cx="9" cy="14.5" r="1.7" fill="#d6da7a" stroke="#a4a84a" stroke-width="0.7"/></svg>
<div class="t" style="left:97.60px;top:675.04px;font-size:12px;letter-spacing:-1.042px;color:#000;">iSCSI</div>
<div class="t" style="left:175.09px;top:675.04px;font-size:12px;letter-spacing:-0.451px;color:#000;">10GbE VLAN 232 (eth0)</div>
<div class="t" style="left:302.52px;top:675.04px;font-size:12px;letter-spacing:-0.258px;color:#000;">NIC 0</div>
<div class="t" style="left:354.95px;top:675.04px;font-size:12px;letter-spacing:-0.188px;color:#000;">Static</div>
<div class="t" style="left:429.79px;top:675.04px;font-size:12px;letter-spacing:-0.590px;color:#000;">10.0.232.4</div>
<div class="t" style="left:517.20px;top:675.04px;font-size:12px;letter-spacing:-0.607px;color:#000;">255.255.255.0</div>
<div class="t" style="left:616.99px;top:675.04px;font-size:12px;letter-spacing:-0.576px;color:#000;">10.0.232.254</div>
<svg style="position:absolute;left:77px;top:693px" width="18" height="18" viewBox="0 0 18 18"><path d="M1 15 H17" stroke="#8c8c8c" stroke-width="1.6"/><circle cx="9" cy="7" r="4.9" fill="#17177a"/><path d="M6.4 5.2 L11.6 8.8 M11.6 5.2 L6.4 8.8" stroke="#f4f4ff" stroke-width="1.7" stroke-linecap="round"/><circle cx="9" cy="15" r="1.7" fill="#d6da7a" stroke="#a4a84a" stroke-width="0.7"/></svg>
<div class="t" style="left:97.12px;top:697.04px;font-size:12px;letter-spacing:0.091px;color:#000;">Management</div>
<div class="t" style="left:174.69px;top:697.04px;font-size:12px;letter-spacing:-0.411px;color:#000;">1GbE (eth2)</div>
<div class="t" style="left:302.52px;top:697.04px;font-size:12px;letter-spacing:-0.306px;color:#000;">NIC 2</div>
<div class="t" style="left:354.95px;top:697.04px;font-size:12px;letter-spacing:-0.188px;color:#000;">Static</div>
<div class="t" style="left:429.79px;top:697.04px;font-size:12px;letter-spacing:-0.590px;color:#000;">10.0.233.5</div>
<div class="t" style="left:517.20px;top:697.04px;font-size:12px;letter-spacing:-0.607px;color:#000;">255.255.255.0</div>
<div class="t" style="left:616.99px;top:697.04px;font-size:12px;letter-spacing:-0.609px;color:#000;">10.0.233.254</div>
<div class="t" style="left:693.79px;top:697.04px;font-size:12px;letter-spacing:-0.580px;color:#000;">10.0.1.2,10.0.1.1</div>
<svg style="position:absolute;left:77px;top:715px" width="18" height="18" viewBox="0 0 18 18"><path d="M1 14.5 H17 M9 3.8 V14.5" stroke="#8c8c8c" stroke-width="1.5"/><circle cx="9" cy="14.5" r="1.7" fill="#d6da7a" stroke="#a4a84a" stroke-width="0.7"/></svg>
<div class="t" style="left:97.60px;top:719.04px;font-size:12px;letter-spacing:-1.042px;color:#000;">iSCSI</div>
<div class="t" style="left:175.09px;top:719.04px;font-size:12px;letter-spacing:-0.451px;color:#000;">10GbE VLAN 232 (eth0)</div>
<div class="t" style="left:302.52px;top:719.04px;font-size:12px;letter-spacing:-0.258px;color:#000;">NIC 0</div>
<div class="t" style="left:354.95px;top:719.04px;font-size:12px;letter-spacing:-0.188px;color:#000;">Static</div>
<div class="t" style="left:429.79px;top:719.04px;font-size:12px;letter-spacing:-0.590px;color:#000;">10.0.232.5</div>
<div class="t" style="left:517.20px;top:719.04px;font-size:12px;letter-spacing:-0.607px;color:#000;">255.255.255.0</div>
<div class="t" style="left:616.99px;top:719.04px;font-size:12px;letter-spacing:-0.576px;color:#000;">10.0.232.254</div>
<svg style="position:absolute;left:77px;top:737px" width="18" height="18" viewBox="0 0 18 18"><path d="M1 15 H17" stroke="#8c8c8c" stroke-width="1.6"/><circle cx="9" cy="7" r="4.9" fill="#17177a"/><path d="M6.4 5.2 L11.6 8.8 M11.6 5.2 L6.4 8.8" stroke="#f4f4ff" stroke-width="1.7" stroke-linecap="round"/><circle cx="9" cy="15" r="1.7" fill="#d6da7a" stroke="#a4a84a" stroke-width="0.7"/></svg>
<div class="t" style="left:97.12px;top:741.04px;font-size:12px;letter-spacing:0.091px;color:#000;">Management</div>
<div class="t" style="left:174.69px;top:741.04px;font-size:12px;letter-spacing:-0.411px;color:#000;">1GbE (eth2)</div>
<div class="t" style="left:302.52px;top:741.04px;font-size:12px;letter-spacing:-0.306px;color:#000;">NIC 2</div>
<div class="t" style="left:354.95px;top:741.04px;font-size:12px;letter-spacing:-0.188px;color:#000;">Static</div>
<div class="t" style="left:429.79px;top:741.04px;font-size:12px;letter-spacing:-0.590px;color:#000;">10.0.233.6</div>
<div class="t" style="left:517.20px;top:741.04px;font-size:12px;letter-spacing:-0.607px;color:#000;">255.255.255.0</div>
<div class="t" style="left:616.99px;top:741.04px;font-size:12px;letter-spacing:-0.609px;color:#000;">10.0.233.254</div>
<div class="t" style="left:693.79px;top:741.04px;font-size:12px;letter-spacing:-0.580px;color:#000;">10.0.1.2,10.0.1.1</div>
<svg style="position:absolute;left:77px;top:759px" width="18" height="18" viewBox="0 0 18 18"><path d="M1 15 H17" stroke="#8c8c8c" stroke-width="1.6"/><circle cx="9" cy="7" r="4.9" fill="#17177a"/><path d="M6.4 5.2 L11.6 8.8 M11.6 5.2 L6.4 8.8" stroke="#f4f4ff" stroke-width="1.7" stroke-linecap="round"/><circle cx="9" cy="15" r="1.7" fill="#d6da7a" stroke="#a4a84a" stroke-width="0.7"/></svg>
<div class="t" style="left:97.12px;top:763.04px;font-size:12px;letter-spacing:0.091px;color:#000;">Management</div>
<div class="t" style="left:174.69px;top:763.04px;font-size:12px;letter-spacing:-0.411px;color:#000;">1GbE (eth2)</div>
<div class="t" style="left:302.52px;top:763.04px;font-size:12px;letter-spacing:-0.306px;color:#000;">NIC 2</div>
<div class="t" style="left:354.95px;top:763.04px;font-size:12px;letter-spacing:-0.188px;color:#000;">Static</div>
<div class="t" style="left:429.79px;top:763.04px;font-size:12px;letter-spacing:-0.590px;color:#000;">10.0.233.7</div>
<div class="t" style="left:517.20px;top:763.04px;font-size:12px;letter-spacing:-0.607px;color:#000;">255.255.255.0</div>
<div class="t" style="left:616.99px;top:763.04px;font-size:12px;letter-spacing:-0.609px;color:#000;">10.0.233.254</div>
<div class="t" style="left:693.79px;top:763.04px;font-size:12px;letter-spacing:-0.580px;color:#000;">10.0.1.2,10.0.1.1</div>
<svg style="position:absolute;left:77px;top:781px" width="18" height="18" viewBox="0 0 18 18"><path d="M1 14.5 H17 M9 3.8 V14.5" stroke="#8c8c8c" stroke-width="1.5"/><circle cx="9" cy="14.5" r="1.7" fill="#d6da7a" stroke="#a4a84a" stroke-width="0.7"/></svg>
<div class="t" style="left:97.60px;top:785.04px;font-size:12px;letter-spacing:-1.042px;color:#000;">iSCSI</div>
<div class="t" style="left:175.09px;top:785.04px;font-size:12px;letter-spacing:-0.451px;color:#000;">10GbE VLAN 232 (eth0)</div>
<div class="t" style="left:302.52px;top:785.04px;font-size:12px;letter-spacing:-0.258px;color:#000;">NIC 0</div>
<div class="t" style="left:354.95px;top:785.04px;font-size:12px;letter-spacing:-0.188px;color:#000;">Static</div>
<div class="t" style="left:429.79px;top:785.04px;font-size:12px;letter-spacing:-0.590px;color:#000;">10.0.232.7</div>
<div class="t" style="left:517.20px;top:785.04px;font-size:12px;letter-spacing:-0.607px;color:#000;">255.255.255.0</div>
<div class="t" style="left:616.99px;top:785.04px;font-size:12px;letter-spacing:-0.576px;color:#000;">10.0.232.254</div>
<div style="position:absolute;left:0;top:798px;width:295px;height:5px;background:#ededed;overflow:hidden"><div class="t" style="left:9.89px;top:-1.20px;font-size:15px;letter-spacing:-1.630px;color:#1a1a1a;">Organization Views</div><div style="position:absolute;left:280px;top:3px;width:4px;height:2px;background:#111"></div></div>
<div style="position:absolute;left:295px;top:798px;width:1px;height:5px;background:#c8c8c8"></div>
</body></html>
